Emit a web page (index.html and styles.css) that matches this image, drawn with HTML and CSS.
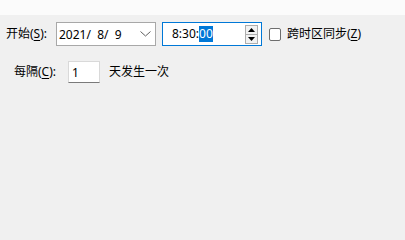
FILE: index.html
```html
<!DOCTYPE html>
<html>
<head>
<meta charset="utf-8">
<link rel="stylesheet" href="styles.css">
</head>
<body>
<div class="topband"></div>
<div class="panel">
  <div class="row row-start">
    <span class="label label-start">开始(<u>S</u>):</span>
    <div class="combo">
      <span class="combo-text">2021/&nbsp; 8/&nbsp; 9</span>
      <svg class="chev" width="11" height="6" viewBox="0 0 11 6"><path d="M0.5 0.5 L5.5 5 L10.5 0.5" fill="none" stroke="#606060" stroke-width="1"/></svg>
    </div>
    <div class="timebox">
      <span class="time-text">8:30:<span class="sel">00</span></span>
      <div class="spin">
        <div class="spin-btn"><svg width="7" height="4" viewBox="0 0 7 4"><path d="M0 4 L3.5 0 L7 4 Z" fill="#000"/></svg></div>
        <div class="spin-btn"><svg width="7" height="4" viewBox="0 0 7 4"><path d="M0 0 L3.5 4 L7 0 Z" fill="#000"/></svg></div>
      </div>
    </div>
    <span class="check"></span>
    <span class="label">跨时区同步(<u>Z</u>)</span>
  </div>
  <div class="row row-every">
    <span class="label label-every">每隔(<u>C</u>):</span>
    <div class="edit"><span>1</span></div>
    <span class="label">天发生一次</span>
  </div>
</div>
</body>
</html>
```
FILE: styles.css
```css
html, body {
  margin: 0;
  padding: 0;
  background: #f0f0f0;
  width: 405px;
  height: 225px;
  overflow: hidden;
  font-family: "Noto Sans", "Noto Sans CJK SC", sans-serif;
  font-size: 12px;
  color: #000;
}
.topband {
  height: 15px;
  background: #fbfbfb;
}
.panel {
  padding-top: 7px;
}
.row {
  display: flex;
  align-items: center;
}
.row-start {
  padding-left: 6px;
  height: 24px;
}
.row-every {
  padding-left: 14px;
  margin-top: 15px;
  height: 22px;
}
.label {
  white-space: nowrap;
  line-height: 16px;
}
.label u {
  text-decoration-thickness: 1px;
  text-underline-offset: 2px;
}
.label-start {
  width: 50px;
}
.label-every {
  width: 54px;
}
.combo {
  box-sizing: border-box;
  width: 100px;
  height: 24px;
  border: 1px solid #a8a8a8;
  background: #fff;
  display: flex;
  align-items: center;
  padding-left: 2px;
  padding-right: 4px;
}
.combo-text {
  flex: 1;
  white-space: pre;
}
.chev {
  display: block;
  margin-right: 0;
}
.timebox {
  box-sizing: border-box;
  width: 100px;
  height: 24px;
  margin-left: 6px;
  border: 1px solid #0078d7;
  background: #fff;
  display: flex;
  align-items: center;
  padding-left: 9px;
  padding-right: 3px;
}
.time-text {
  flex: 1;
  white-space: pre;
  line-height: 16px;
}
.sel {
  background: #0078d7;
  color: #fff;
  display: inline-block;
  line-height: 16px;
}
.spin {
  display: flex;
  flex-direction: column;
  width: 13px;
  height: 19px;
}
.spin-btn {
  flex: 1;
  box-sizing: border-box;
  border: 1px solid #adadad;
  background: #f2f2f2;
  display: flex;
  align-items: center;
  justify-content: center;
}
.spin-btn + .spin-btn {
  border-top: none;
}
.check {
  box-sizing: border-box;
  width: 12px;
  height: 13px;
  border: 1px solid #6d6d6d;
  border-radius: 2px;
  background: #fff;
  margin-left: 7px;
  margin-right: 6px;
}
.edit {
  box-sizing: border-box;
  width: 32px;
  height: 22px;
  border: 1px solid #d9d9d9;
  border-bottom-color: #7a7a7a;
  background: #fff;
  display: flex;
  align-items: center;
  padding-left: 3px;
  margin-right: 9px;
}
```
